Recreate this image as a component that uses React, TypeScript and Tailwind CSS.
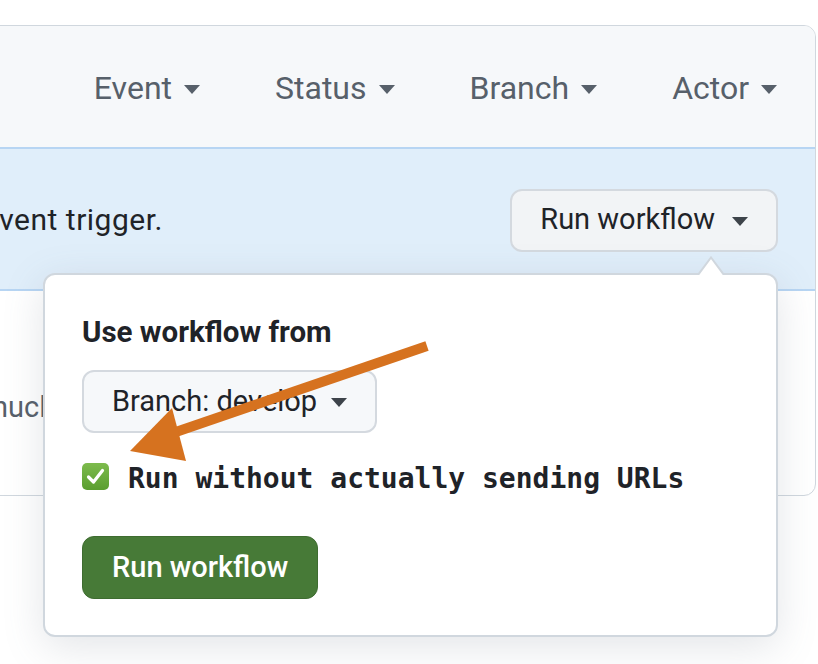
import React from "react";

const Caret = ({ className = "" }: { className?: string }) => (
  <svg width="16" height="9" viewBox="0 0 16 9" className={className}>
    <path d="M0 0 L16 0 L8 9 Z" fill="currentColor" />
  </svg>
);

export default function App() {
  const sans = { fontFamily: "Roboto, 'Liberation Sans', sans-serif" };
  return (
    <div
      className="relative w-[818px] h-[664px] overflow-hidden bg-white"
      style={sans}
    >
      <div className="pt-[25px] pr-[2px]">
        <div className="ml-[-20px] border border-[#d0d7de] rounded-[12px] overflow-hidden bg-white">
          {/* header filters */}
          <div className="h-[123px] pt-[3px] bg-[#f6f8fa] border-b-2 border-[#b7d5f3] flex items-center justify-end pr-[38px] text-[#57606a] text-[32px] gap-[75px]">
            {["Event", "Status", "Branch", "Actor"].map((t) => (
              <div key={t} className="flex items-center gap-[12px]">
                <span>{t}</span>
                <Caret className="mt-[3px]" />
              </div>
            ))}
          </div>
          {/* banner */}
          <div className="h-[142px] bg-[#e0eefa] border-b-2 border-[#b7d5f3] flex items-center justify-between pr-[37px]">
            <div className="w-[182px] flex justify-end whitespace-nowrap">
              <span className="text-[30px] tracking-[0.5px] text-[#1f2328]">manual event trigger.</span>
            </div>
            <div className="h-[63px] px-[28px] flex items-center gap-[17px] bg-[#f2f4f6] border-2 border-[#d4d9df] rounded-[12px] text-[29px] text-[#1f2328] mt-[2px]">
              <span>Run workflow</span>
              <Caret className="text-[#3d434a] mt-[2px]" />
            </div>
          </div>
          {/* body */}
          <div className="h-[204px] pt-[95px] pl-[11px] whitespace-nowrap">
            <span className="text-[29px] text-[#57606a]">nuclear option</span>
          </div>
        </div>
      </div>

      {/* popup */}
      <div className="absolute left-[43px] top-[273px] w-[735px] h-[364px] bg-white border-2 border-[#d0d7de] rounded-[12px] shadow-[0_10px_40px_rgba(100,110,130,0.18)] px-[37px] pt-[40px]">
        <svg
          className="absolute right-[52px] top-[-19px]"
          width="26"
          height="19"
          viewBox="0 0 26 19"
        >
          <path d="M0 19 L13 1.5 L26 19" fill="white" stroke="#d0d7de" strokeWidth="2" />
        </svg>
        <div className="text-[29.5px] font-bold text-[#1f2328] leading-[34px]">Use workflow from</div>
        <div className="mt-[21px] inline-flex h-[63px] items-center gap-[14px] px-[28px] bg-[#f6f8fa] border-2 border-[#d4d9df] rounded-[12px] text-[29px] text-[#1f2328]">
          <span>Branch: develop</span>
          <Caret className="text-[#3d434a] mt-[2px]" />
        </div>
        <div className="mt-[20px] flex items-center gap-[19px]">
          <div className="w-[27px] h-[27px] rounded-[5px] bg-[linear-gradient(#7dbb4d,#5a9e2f)] flex items-center justify-center">
            <svg width="19" height="17" viewBox="0 0 19 17">
              <path d="M2.5 9 L7.5 14 L16.5 2.5" fill="none" stroke="white" strokeWidth="3.2" strokeLinecap="round" strokeLinejoin="round" />
            </svg>
          </div>
          <span
            className="text-[28px] font-semibold text-[#1f2328] mt-[5px]"
            style={{ fontFamily: "'DejaVu Sans Mono', 'Liberation Mono', monospace" }}
          >
            Run without actually sending URLs
          </span>
        </div>
        <div className="mt-[36px] inline-flex h-[63px] items-center px-[29px] bg-[#477a37] border border-[#3e6c30] rounded-[12px] text-[29px] font-medium text-white">
          Run workflow
        </div>
      </div>

      {/* arrow annotation */}
      <svg className="absolute left-0 top-0" width="818" height="664" viewBox="0 0 818 664">
        <line x1="427" y1="346" x2="170" y2="434" stroke="#d6721f" strokeWidth="10" />
        <path d="M130 451 L172 408 L186 461 Z" fill="#d6721f" />
      </svg>
    </div>
  );
}
